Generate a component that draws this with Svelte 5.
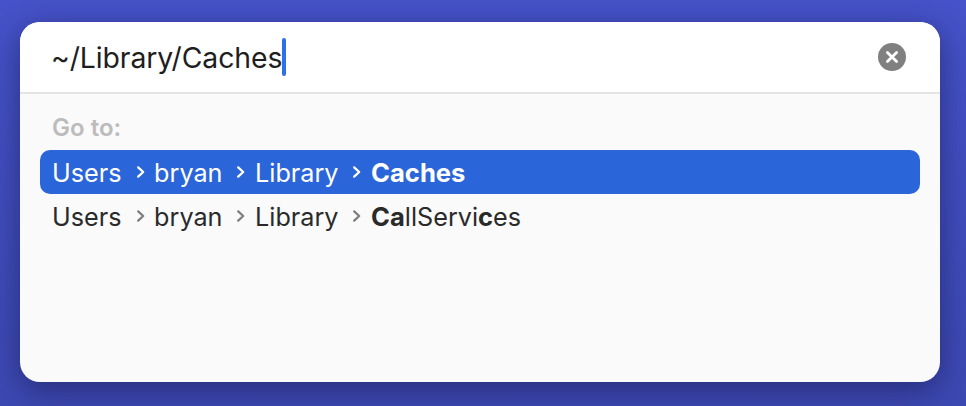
<div class="page">
	<section class="panel" aria-label="Go to folder">
		<header class="search">
			<div class="query"><span>~/Library/Caches</span><i class="caret"></i></div>
			<button class="clear" aria-label="Clear">
				<svg viewBox="0 0 28 28" width="28" height="28"><circle cx="14" cy="14" r="14" fill="#808080"/><path d="M9.4 9.4 18.6 18.6M18.6 9.4 9.4 18.6" stroke="#fff" stroke-width="2.8" stroke-linecap="round"/></svg>
			</button>
		</header>
		<div class="results">
			<div class="label">Go to:</div>
			<div class="row selected">
				<span class="seg">Users</span>{@render chev()}<span class="seg">bryan</span>{@render chev()}<span class="seg">Library</span>{@render chev()}<span class="seg"><b>Caches</b></span>
			</div>
			<div class="row">
				<span class="seg">Users</span>{@render chev()}<span class="seg">bryan</span>{@render chev()}<span class="seg">Library</span>{@render chev()}<span class="seg"><b>Ca</b>llServi<b>c</b>es</span>
			</div>
		</div>
	</section>
</div>

{#snippet chev()}
	<svg class="chev" viewBox="0 0 10 14" width="10" height="14"><path d="M2.2 2.4 7.2 7 2.2 11.6" fill="none" stroke="currentColor" stroke-width="2.3" stroke-linecap="round" stroke-linejoin="round"/></svg>
{/snippet}

<style>
	:global(body) { margin: 0; }
	.page {
		width: 966px;
		height: 406px;
		box-sizing: border-box;
		padding: 22px 26px 24px 20px;
		background: linear-gradient(180deg, #4653ca 0%, #414dbd 55%, #3d49b3 100%);
		font-family: Inter, "Liberation Sans", sans-serif;
		overflow: hidden;
	}
	.panel {
		height: 360px;
		border-radius: 20px;
		background: #fafafa;
		overflow: hidden;
		display: flex;
		flex-direction: column;
		box-shadow: 0 8px 32px rgba(25, 28, 80, 0.62);
	}
	.search {
		height: 70px;
		flex: none;
		background: #fff;
		border-bottom: 2px solid #e4e4e4;
		display: flex;
		align-items: center;
		justify-content: space-between;
		padding: 0 34px 0 32px;
	}
	.query {
		display: flex;
		align-items: center;
		font-size: 28.4px;
		letter-spacing: -0.1px;
		color: #1e1e1e;
		line-height: 38px;
		margin-left: -1px;
	}
	.query span { padding-top: 2px; }
	.caret {
		width: 4px;
		height: 38px;
		border-radius: 2px;
		background: #2f6fe8;
	}
	.clear {
		all: unset;
		display: block;
		width: 28px;
		height: 28px;
	}
	.clear svg { display: block; }
	.results {
		padding: 0 20px;
	}
	.label {
		font-size: 24px;
		font-weight: 600;
		color: #bcbcbc;
		line-height: 24px;
		padding: 22px 12px 10px;
	}
	.row {
		height: 44px;
		padding: 0 12px;
		border-radius: 10px;
		display: flex;
		align-items: center;
		font-size: 25.2px;
		color: #2a2a2a;
	}
	.row.selected {
		background: #2b65da;
		color: #fff;
	}
	.seg { padding-top: 2px; line-height: 30px; }
	.seg b { font-weight: 700; font-size: 25.6px; line-height: 1; }
	.chev {
		color: #7f7f7f;
		margin: 0 8.6px 0 14px;
		flex: none;
	}
	.selected .chev { color: #fff; }
</style>
